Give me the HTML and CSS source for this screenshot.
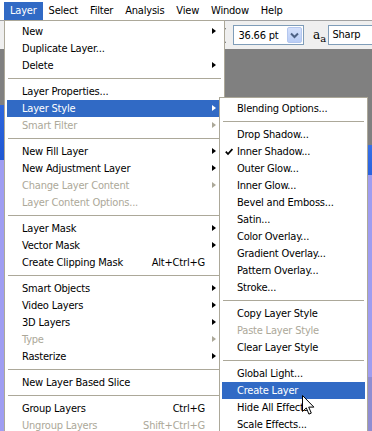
FILE: index.html
```html
<!doctype html>
<html>
<head>
<meta charset="utf-8">
<title>Layer menu</title>
<link rel="stylesheet" href="styles.css">
</head>
<body>
<div class="menubar">
	<span class="mb-item on">Layer</span>
	<span class="mb-item">Select</span>
	<span class="mb-item">Filter</span>
	<span class="mb-item">Analysis</span>
	<span class="mb-item">View</span>
	<span class="mb-item">Window</span>
	<span class="mb-item">Help</span>
</div>
<div class="toolbar">
	<svg class="size-icon" width="16" height="18" viewBox="0 0 16 18">
		<path d="M10 2h-1.5v15H10M10 2.5h2M10 16.5h2" fill="none" stroke="#000" stroke-width="1.2"/>
	</svg>
	<div class="combo">
		<span class="combo-text">36.66 pt</span>
		<span class="combo-btn">
			<svg width="9" height="7" viewBox="0 0 9 7"><path d="M1 1.5l3.5 3.5 3.5-3.5" fill="none" stroke="#4d6185" stroke-width="2"/></svg>
		</span>
	</div>
	<span class="aa">a<span class="aa-small">a</span></span>
	<div class="field">Sharp</div>
</div>
<div class="canvas"></div>

<ul class="menu main">
	<li class="sub">New</li>
	<li>Duplicate Layer...</li>
	<li class="sub">Delete</li>
	<li class="sep"></li>
	<li>Layer Properties...</li>
	<li class="sub on">Layer Style</li>
	<li class="sub off">Smart Filter</li>
	<li class="sep"></li>
	<li class="sub">New Fill Layer</li>
	<li class="sub">New Adjustment Layer</li>
	<li class="sub off">Change Layer Content</li>
	<li class="off">Layer Content Options...</li>
	<li class="sep"></li>
	<li class="sub">Layer Mask</li>
	<li class="sub">Vector Mask</li>
	<li>Create Clipping Mask<span class="key">Alt+Ctrl+G</span></li>
	<li class="sep"></li>
	<li class="sub">Smart Objects</li>
	<li class="sub">Video Layers</li>
	<li class="sub">3D Layers</li>
	<li class="sub off">Type</li>
	<li class="sub">Rasterize</li>
	<li class="sep"></li>
	<li>New Layer Based Slice</li>
	<li class="sep"></li>
	<li>Group Layers<span class="key">Ctrl+G</span></li>
	<li class="off">Ungroup Layers<span class="key">Shift+Ctrl+G</span></li>
</ul>

<ul class="menu style">
	<li>Blending Options...</li>
	<li class="sep"></li>
	<li>Drop Shadow...</li>
	<li><svg class="check" width="8" height="8" viewBox="0 0 8 8"><path d="M0.8 3.6l2.2 2.4 4.4-5" fill="none" stroke="#000" stroke-width="1.8"/></svg>Inner Shadow...</li>
	<li>Outer Glow...</li>
	<li>Inner Glow...</li>
	<li>Bevel and Emboss...</li>
	<li>Satin...</li>
	<li>Color Overlay...</li>
	<li>Gradient Overlay...</li>
	<li>Pattern Overlay...</li>
	<li>Stroke...</li>
	<li class="sep"></li>
	<li>Copy Layer Style</li>
	<li class="off">Paste Layer Style</li>
	<li>Clear Layer Style</li>
	<li class="sep"></li>
	<li>Global Light...</li>
	<li class="on">Create Layer</li>
	<li>Hide All Effects</li>
	<li>Scale Effects...</li>
</ul>

<svg class="cursor" width="13" height="21" viewBox="0 0 13 21">
	<path d="M0.5 0.5v16l3.8-3.6 2.6 6.2 2.4-1-2.6-6h5.2z" fill="#fff" stroke="#000" stroke-width="1"/>
</svg>
</body>
</html>
```

FILE: styles.css
```css
*{margin:0; padding:0; list-style:none; box-sizing:border-box;}
body{width:372px; height:431px; overflow:hidden; display:flex; flex-direction:column; font-family:Tahoma,"DejaVu Sans Condensed","Liberation Sans",sans-serif; font-size:11px; letter-spacing:-0.2px; color:#000; background:#808080;}

.menubar{height:20px; display:flex; padding:2px 0 0 4px; background:#fff;}
.mb-item{padding:0 6px; line-height:18px; height:18px;}
.mb-item.on{background:#316ac5; color:#fff;}

.toolbar{height:29px; display:flex; align-items:center; padding-left:214px; background:#efefef; border-top:1px solid #a2a2a2;}
.size-icon{margin-right:4px;}
.combo{width:73px; height:20px; display:flex; align-items:center; border:1px solid #7f9db9; background:#fff;}
.combo-text{flex:1; padding-left:4px;}
.combo-btn{width:15px; height:16px; margin-right:1px; display:flex; align-items:center; justify-content:center; background:linear-gradient(#d4e0fb,#b9cdf6); border:1px solid #b4c7ee; border-radius:2px;}
.aa{margin-left:9px; width:16px; font-family:"DejaVu Serif",serif; font-size:12px; line-height:12px; letter-spacing:0;}
.aa-small{font-size:10px; position:relative; top:3px;}
.field{width:45px; height:20px; border:1px solid #7f9db9; border-right:0; background:#fff; padding-left:3px; line-height:18px;}

.canvas{flex:1;
	background:
		linear-gradient(#808080 0, #808080 56px, #2e66dc 56px, #1e57d3 111px, #9f9df2 111px) left top/4px 100% no-repeat,
		linear-gradient(#808080 0, #808080 96px, #3770e6 96px, #2a62de 126px, #9f9df0 126px, #9f9df0 328px, #8f8dd2 328px) right top/4px 100% no-repeat,
		#808080;}

.menu{position:absolute; background:#fff; border:1px solid #aca899; border-bottom:0; padding:2px 2px 0; overflow:hidden;}
.menu.main{left:4px; top:20px; width:221px; height:411px;}
.menu.style{left:219px; top:97px; width:149px; height:334px;}
.menu li{height:17px; line-height:17px; padding:0 17px 0 15px; display:flex; white-space:nowrap;}
.menu li.on{background:#316ac5; color:#fff;}
.menu li.off{color:#aca899;}
.menu li.sep{height:9px; padding:0; margin:0 1px;}
.menu li.sep::before{content:''; display:block; flex:1; margin-top:4px; border-top:1px solid #aca899;}
.menu .key{margin-left:auto;}
.menu li.sub{padding-right:6px;}
.menu li.sub::after{content:''; margin:5px 0 0 auto; width:0; height:0; border-left:4px solid #000; border-top:3.5px solid transparent; border-bottom:3.5px solid transparent;}
.menu li.sub.on::after{border-left-color:#fff;}
.menu li.sub.off::after{border-left-color:#aca899;}
.check{margin:5px 4px 0 -12px;}

.cursor{position:absolute; left:302px; top:395px;}
```
